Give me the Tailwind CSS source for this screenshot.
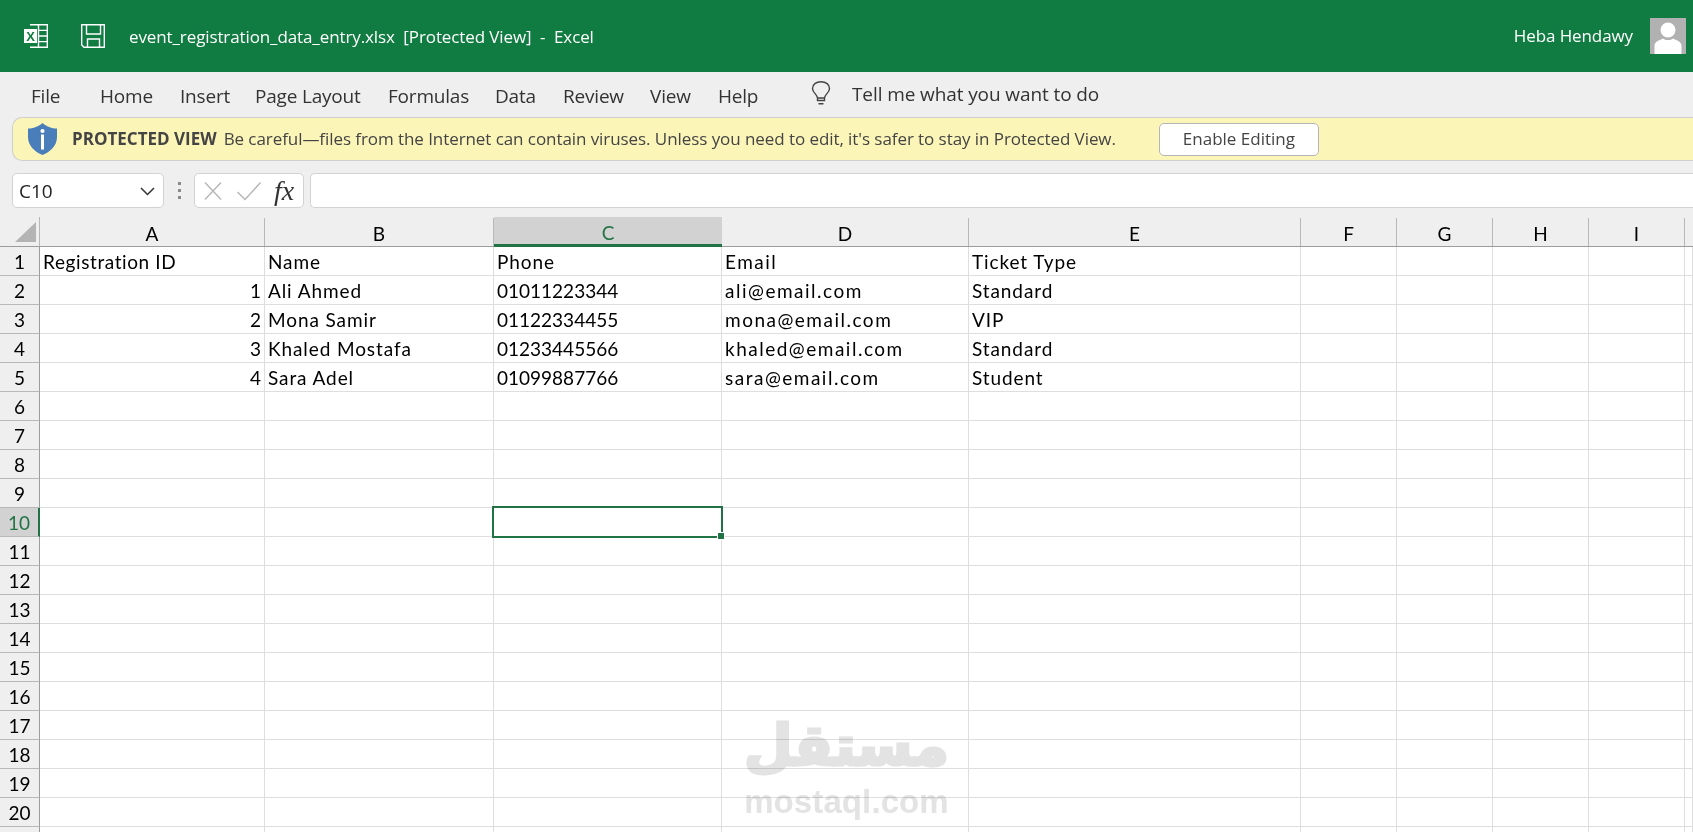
<!doctype html>
<html lang="en">

<head>
    <meta charset="utf-8">
    <meta name="viewport" content="width=device-width, initial-scale=1">
    <title>event_registration_data_entry.xlsx - Excel</title>
    <script src="https://cdn.jsdelivr.net/npm/@tailwindcss/browser@4"></script>
</head>

<body class="bg-[#efefef] m-0">
    <div class="relative w-[1693px] h-[832px] overflow-hidden font-['Open_Sans',sans-serif]">

        <!-- title bar -->
        <div class="flex items-center h-[72px] bg-[#107c41] text-white">
            <svg class="ml-[24px] w-[24px] h-[24px]" viewBox="0 0 24 24" fill="none" stroke="#fff" stroke-width="1.4">
                <path d="M6 .7H23.3V23.3H6M14.5 .7V23.3M14.5 6.4H23.3M14.5 12H23.3M14.5 17.6H23.3" />
                <rect x="0" y="5" width="13" height="14" fill="#fff" stroke="none" />
                <text x="6.5" y="17" text-anchor="middle" font-family="Liberation Sans" font-weight="700" font-size="13" fill="#107c41" stroke="none">X</text>
            </svg>
            <svg class="ml-[33px] w-[24px] h-[24px]" viewBox="0 0 24 24" fill="none" stroke="#fff" stroke-width="1.4">
                <path d="M.7 .7H23.3V23.3H3L.7 21Z" />
                <path d="M5.5 .7V10H19.5V.7M6.5 23.3V15H18.5V23.3" />
            </svg>
            <div class="ml-[24px] mt-[1px] text-[17px] tracking-[-0.11px] whitespace-pre">event_registration_data_entry.xlsx  [Protected View]  -  Excel</div>
            <div class="ml-auto text-[17px] tracking-[-0.1px]">Heba Hendawy</div>
            <div class="ml-[17px] mr-[7px] w-[36px] h-[36px] bg-[#b1b1b1] overflow-hidden">
                <svg class="w-full h-full" viewBox="0 0 36 36" fill="#fff">
                    <circle cx="18" cy="12" r="7.5" />
                    <path d="M4.5 36V28C4.5 23.5 9 22.5 13 20.5C15.5 22.5 20.5 22.5 23 20.5C27 22.5 31.5 23.5 31.5 28V36Z" />
                </svg>
            </div>
        </div>

        <!-- ribbon tabs -->
        <div class="flex items-center h-[45px] pt-[3px] text-[19px] text-[#333] tracking-[-0.2px] pl-[31px]">
            <span class="w-[69px]">File</span>
            <span class="w-[80px]">Home</span>
            <span class="w-[75px]">Insert</span>
            <span class="w-[133px]">Page Layout</span>
            <span class="w-[107px]">Formulas</span>
            <span class="w-[68px]">Data</span>
            <span class="w-[87px]">Review</span>
            <span class="w-[68px]">View</span>
            <span class="w-[93px]">Help</span>
            <svg class="w-[20px] h-[24px] -mt-[6px]" viewBox="0 0 20 24" fill="none" stroke="#444" stroke-width="1.4">
                <path d="M6.5 17C6.5 13.5 1.5 12 1.5 7.5C1.5 3.5 5 .8 10 .8S18.5 3.5 18.5 7.5C18.5 12 13.5 13.5 13.5 17V19.5H6.5ZM6.5 17H13.5M7.5 22.8H12.5" />
            </svg>
            <span class="ml-[21px] -mt-[4px] tracking-[-0.1px]">Tell me what you want to do</span>
        </div>

        <!-- protected view bar -->
        <div class="flex items-center h-[44px] ml-[12px] bg-[#fcf5b8] border-y border-l border-[#cfcfcf] rounded-l-[10px] text-[17px] text-[#444]">
            <svg class="ml-[15px] w-[29px] h-[32px]" viewBox="0 0 29 32">
                <path fill="#4a7ebb" d="M14.5 0C18 3.5 24 5.5 29 5.5V14C29 23 22 29 14.5 32C7 29 0 23 0 14V5.5C5 5.5 11 3.5 14.5 0Z" />
                <circle cx="14.5" cy="8" r="2.1" fill="#fff" />
                <rect x="13" y="11.5" width="3" height="15" fill="#fff" />
            </svg>
            <span class="ml-[15px] font-bold">PROTECTED VIEW</span>
            <span class="ml-[7px] tracking-[-0.07px]">Be careful—files from the Internet can contain viruses. Unless you need to edit, it's safer to stay in Protected View.</span>
            <button class="ml-[43px] w-[160px] h-[33px] bg-white border border-[#b5b5b5] rounded-[5px]">Enable Editing</button>
        </div>

        <!-- formula bar -->
        <div class="flex items-stretch h-[35px] mt-[12px] pl-[12px]">
            <div class="flex items-center justify-between w-[152px] pl-[6px] pr-[8px] pt-[1px] bg-white border border-[#d2d2d2] rounded-[5px] text-[19px] text-[#222]">
                <span>C10</span>
                <svg class="w-[15px] h-[9px]" viewBox="0 0 15 9" fill="none" stroke="#333" stroke-width="1.5">
                    <path d="M1 1L7.5 7.5L14 1" />
                </svg>
            </div>
            <div class="flex flex-col items-center justify-center gap-[4px] w-[30px]">
                <span class="w-[3px] h-[3px] bg-[#8a8a8a]"></span>
                <span class="w-[3px] h-[3px] bg-[#8a8a8a]"></span>
                <span class="w-[3px] h-[3px] bg-[#8a8a8a]"></span>
            </div>
            <div class="flex items-center w-[110px] bg-white border border-[#d2d2d2] rounded-[5px]">
                <svg class="ml-[8px] w-[20px] h-[20px]" viewBox="0 0 20 20" fill="none" stroke="#b5b5b5" stroke-width="1.4">
                    <path d="M2 1.5L18 18.5M18 1.5L2 18.5" />
                </svg>
                <svg class="ml-[13px] w-[26px] h-[20px]" viewBox="0 0 26 20" fill="none" stroke="#b5b5b5" stroke-width="1.4">
                    <path d="M1.5 11L9 18.5L24.5 1.5" />
                </svg>
                <span class="ml-[12px] font-['Liberation_Serif',serif] italic text-[28px] leading-none text-[#333]">fx</span>
            </div>
            <div class="flex-1 ml-[6px] bg-white border-y border-l border-[#d2d2d2] rounded-l-[5px]"></div>
        </div>

        <!-- sheet -->
        <div class="font-['Lato',sans-serif] text-[19px] text-black">
            <div class="flex items-end h-[39px] border-b border-[#9c9c9c] text-center leading-[32px]">
                <div class="relative w-[40px] h-[29px] border-r border-[#b8b8b8] shrink-0">
                    <svg class="absolute left-[15px] top-[5px] w-[21px] h-[20px]" viewBox="0 0 21 20">
                        <path fill="#b4b4b4" d="M21 0V20H0Z" />
                    </svg>
                </div>
                <div class="w-[225px] h-[28px] border-r border-[#b8b8b8]">A</div>
                <div class="w-[229px] h-[28px] border-r border-[#b8b8b8]">B</div>
                <div class="w-[228px] h-[30px] -mb-px bg-[#d2d2d2] border-b-[3px] border-[#217346] text-[#217346]">C</div>
                <div class="w-[247px] h-[28px] border-r border-[#b8b8b8]">D</div>
                <div class="w-[332px] h-[28px] border-r border-[#b8b8b8]">E</div>
                <div class="w-[96px] h-[28px] border-r border-[#b8b8b8]">F</div>
                <div class="w-[96px] h-[28px] border-r border-[#b8b8b8]">G</div>
                <div class="w-[96px] h-[28px] border-r border-[#b8b8b8]">H</div>
                <div class="w-[96px] h-[28px] border-r border-[#b8b8b8]">I</div>
            </div>
            <div id="rows"></div>
        </div>

        <!-- selected cell C10 -->
        <div class="absolute left-[492px] top-[506px] w-[231px] h-[32px] border-2 border-[#217346]"></div>
        <div class="absolute left-[717px] top-[532px] w-[8px] h-[8px] bg-[#217346] border border-white"></div>

        <!-- watermark -->
        <div class="absolute left-[745px] top-[708px] w-[203px] flex flex-col items-center text-[#e3e3e3] mix-blend-multiply pointer-events-none">
            <div class="font-['DejaVu_Sans',sans-serif] font-bold text-[56px] leading-[76px] [-webkit-text-stroke:3px_#e3e3e3]" dir="rtl">مستقل</div>
            <div class="font-['Liberation_Sans',sans-serif] font-bold text-[33px] leading-[36px] tracking-[0.1px]">mostaql.com</div>
        </div>
    </div>

    <script>
        const data = {
            1: ['Registration ID', 'Name', 'Phone', 'Email', 'Ticket Type'],
            2: [1, 'Ali Ahmed', '01011223344', 'ali@email.com', 'Standard'],
            3: [2, 'Mona Samir', '01122334455', 'mona@email.com', 'VIP'],
            4: [3, 'Khaled Mostafa', '01233445566', 'khaled@email.com', 'Standard'],
            5: [4, 'Sara Adel', '01099887766', 'sara@email.com', 'Student'],
        };
        const widths = ['w-[225px]', 'w-[229px]', 'w-[228px]', 'w-[247px]', 'w-[332px]', 'w-[96px]', 'w-[96px]', 'w-[96px]', 'w-[96px]', 'w-[8px]'];
        let html = '';
        for (let r = 1; r <= 21; r++) {
            const head = r === 10
                ? 'bg-[#d2d2d2] text-[#217346] border-r-[2px] border-r-[#217346] border-b-[#b8b8b8]'
                : 'border-r border-r-[#9c9c9c] border-b-[#b8b8b8]';
            // row 21 only shows its top few pixels, its number stays below the window
            let cells = `<div class="w-[40px] h-[29px] shrink-0 flex items-center justify-center pt-[3px] border-b ${head}">${r < 21 ? r : ''}</div>`;
            widths.forEach((w, c) => {
                const v = data[r] ? data[r][c] ?? '' : '';
                const num = typeof v === 'number' ? 'justify-end' : '';
                let track = 'tracking-[0.9px]';
                if (/^\d+$/.test(v)) track = 'tracking-normal';
                else if (c === 0) track = 'tracking-[0.6px]';
                else if (c === 3) track = 'tracking-[1.5px]';
                cells += `<div class="${w} h-[29px] shrink-0 flex items-center ${num} pt-[3px] px-[3px] ${track} bg-white border-r border-b border-[#dedede] whitespace-nowrap">${v}</div>`;
            });
            html += `<div class="flex">${cells}</div>`;
        }
        document.getElementById('rows').innerHTML = html;
    </script>
</body>

</html>
